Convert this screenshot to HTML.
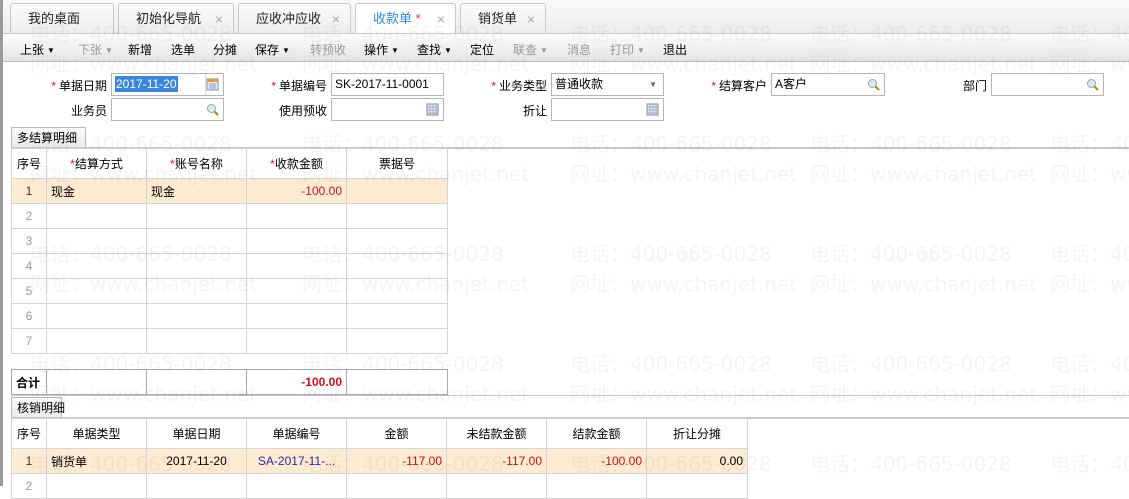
<!DOCTYPE html>
<html><head><meta charset="utf-8"><style>
*{box-sizing:border-box;margin:0;padding:0}
body{width:1129px;height:486px;overflow:hidden;background:#fff;position:relative;font:12px "Liberation Sans","Noto Sans CJK SC",sans-serif;color:#000}
.a{position:absolute}
.lbar{left:0;top:0;width:3px;height:486px;background:#9a9a9a}
.tabbar{left:3px;top:0;width:1126px;height:34px;background:linear-gradient(#fafafa,#ececec)}
.tab{position:absolute;top:3px;height:31px;border:1px solid #c9c9c9;border-bottom:none;border-radius:3px 3px 0 0;background:linear-gradient(#fbfbfb,#ededed);font-size:13px;line-height:30px;padding-left:17px;color:#222;white-space:nowrap}
.tab .x{position:absolute;right:10px;color:#aaa;font-size:14px}
.tab.on{background:#fff;color:#2f8ad8;height:32px}
.tool{left:3px;top:33px;width:1126px;height:29px;background:linear-gradient(#fdfdfd,#e4e4e4);border-top:1px solid #c8c8c8;border-bottom:1px solid #bdbdbd}
.ti{position:absolute;top:7px;font-size:12px}
.g{color:#999}
.tri{font-size:8px;vertical-align:1px;margin-left:3px}
.lab{position:absolute;text-align:right;width:100px;font-size:12px}
.lab i{color:#d2143a;font-style:normal;margin-right:3px}
.inp{position:absolute;height:23px;border:1px solid #b5b5b5;background:#fff;font-size:12px;line-height:21px;padding-left:3px}
.ic{position:absolute;right:4px;top:4px;width:13px;height:13px}
.stab{position:absolute;height:21px;border:1px solid #b8b8b8;border-bottom:none;background:linear-gradient(#fafafa,#ebebeb);font-size:12px;line-height:20px;padding:0 5px;white-space:nowrap}
.hl{position:absolute;height:2px;background:#c8c8c8;left:11px;right:0}
table{position:absolute;border-collapse:collapse;table-layout:fixed}
td{border:1px solid #d4d4d4;font-size:12px;height:25px;padding:0 4px;white-space:nowrap;overflow:hidden}
tr.h td{height:30px;text-align:center}
td.n{text-align:center;color:#999}
.r{color:#d0111d;text-align:right}
.hi td{background:#fdebd2}
.s{color:#d2143a}
.wm{position:absolute;font:20px "DejaVu Sans","Noto Sans CJK SC",sans-serif;color:rgba(0,0,0,0.045);white-space:nowrap;pointer-events:none}
</style></head><body>
<div class="a lbar"></div>
<div class="a tabbar"></div>
<div class="tab" style="left:10px;width:104px">我的桌面</div>
<div class="tab" style="left:118px;width:116px">初始化导航<span class="x">×</span></div>
<div class="tab" style="left:238px;width:113px">应收冲应收<span class="x">×</span></div>
<div class="tab on" style="left:355px;width:101px">收款单 <span style="color:#e33">*</span><span class="x">×</span></div>
<div class="tab" style="left:460px;width:86px">销货单<span class="x">×</span></div>
<div class="a tool">
<span class="ti" style="left:17px">上张<span class="tri">▼</span></span>
<span class="ti g" style="left:75px">下张<span class="tri">▼</span></span>
<span class="ti" style="left:125px">新增</span>
<span class="ti" style="left:168px">选单</span>
<span class="ti" style="left:210px">分摊</span>
<span class="ti" style="left:252px">保存<span class="tri">▼</span></span>
<span class="ti g" style="left:307px">转预收</span>
<span class="ti" style="left:361px">操作<span class="tri">▼</span></span>
<span class="ti" style="left:414px">查找<span class="tri">▼</span></span>
<span class="ti" style="left:467px">定位</span>
<span class="ti g" style="left:510px">联查<span class="tri">▼</span></span>
<span class="ti g" style="left:564px">消息</span>
<span class="ti g" style="left:607px">打印<span class="tri">▼</span></span>
<span class="ti" style="left:660px">退出</span>
</div>

<div class="lab" style="left:7px;top:77px"><i>*</i>单据日期</div>
<div class="inp" style="left:111px;top:73px;width:113px"><span style="background:#3a86d8;color:#fff;padding:1px 1px">2017-11-20</span><span style="position:absolute;left:93px;top:0;width:1px;height:21px;background:#ddd"></span><svg class="ic" viewBox="0 0 13 13"><rect x="1" y="1" width="11" height="11" fill="#e8eef8" stroke="#7c8ea8"/><rect x="1" y="1" width="11" height="3" fill="#e0a030"/><path d="M3 6h7M3 8h7M3 10h7" stroke="#8a9ab8"/></svg></div>
<div class="lab" style="left:227px;top:77px"><i>*</i>单据编号</div>
<div class="inp" style="left:331px;top:73px;width:113px">SK-2017-11-0001</div>
<div class="lab" style="left:447px;top:77px"><i>*</i>业务类型</div>
<div class="inp" style="left:551px;top:73px;width:113px">普通收款<span style="position:absolute;right:6px;top:0;font-size:8px;color:#666">▼</span></div>
<div class="lab" style="left:667px;top:77px"><i>*</i>结算客户</div>
<div class="inp" style="left:771px;top:73px;width:114px">A客户<svg class="ic" viewBox="0 0 13 13"><circle cx="5.5" cy="5.5" r="4" fill="#dfe8f4" stroke="#8aa"/><path d="M8.5 8.5l3.5 3.5" stroke="#b8860b" stroke-width="2"/></svg></div>
<div class="lab" style="left:887px;top:77px">部门</div>
<div class="inp" style="left:991px;top:73px;width:113px"><svg class="ic" viewBox="0 0 13 13"><circle cx="5.5" cy="5.5" r="4" fill="#dfe8f4" stroke="#8aa"/><path d="M8.5 8.5l3.5 3.5" stroke="#b8860b" stroke-width="2"/></svg></div>

<div class="lab" style="left:7px;top:102px">业务员</div>
<div class="inp" style="left:111px;top:98px;width:113px"><svg class="ic" viewBox="0 0 13 13"><circle cx="5.5" cy="5.5" r="4" fill="#dfe8f4" stroke="#8aa"/><path d="M8.5 8.5l3.5 3.5" stroke="#b8860b" stroke-width="2"/></svg></div>
<div class="lab" style="left:227px;top:102px">使用预收</div>
<div class="inp" style="left:331px;top:98px;width:113px"><svg class="ic" viewBox="0 0 13 13"><rect x="1" y="1" width="11" height="11" fill="#e8eef8" stroke="#7c8ea8"/><path d="M1 4h11M1 7h11M1 10h11M4 1v11M7 1v11M10 1v11" stroke="#8a9ab8" stroke-width=".7"/></svg></div>
<div class="lab" style="left:447px;top:102px">折让</div>
<div class="inp" style="left:551px;top:98px;width:113px"><svg class="ic" viewBox="0 0 13 13"><rect x="1" y="1" width="11" height="11" fill="#e8eef8" stroke="#7c8ea8"/><path d="M1 4h11M1 7h11M1 10h11M4 1v11M7 1v11M10 1v11" stroke="#8a9ab8" stroke-width=".7"/></svg></div>

<div class="stab" style="left:11px;top:127px;width:75px">多结算明细</div>
<div class="hl" style="top:147px"></div>
<table style="left:11px;top:148px;width:436px">
<colgroup><col style="width:35px"><col style="width:100px"><col style="width:100px"><col style="width:100px"><col style="width:101px"></colgroup>
<tr class="h"><td>序号</td><td><span class="s">*</span>结算方式</td><td><span class="s">*</span>账号名称</td><td><span class="s">*</span>收款金额</td><td>票据号</td></tr>
<tr class="hi"><td class="n" style="color:#333">1</td><td>现金</td><td>现金</td><td class="r">-100.00</td><td></td></tr>
<tr><td class="n">2</td><td></td><td></td><td></td><td></td></tr>
<tr><td class="n">3</td><td></td><td></td><td></td><td></td></tr>
<tr><td class="n">4</td><td></td><td></td><td></td><td></td></tr>
<tr><td class="n">5</td><td></td><td></td><td></td><td></td></tr>
<tr><td class="n">6</td><td></td><td></td><td></td><td></td></tr>
<tr><td class="n">7</td><td></td><td></td><td></td><td></td></tr>
</table>
<table style="left:11px;top:369px;width:436px">
<colgroup><col style="width:35px"><col style="width:100px"><col style="width:100px"><col style="width:100px"><col style="width:101px"></colgroup>
<tr><td style="border-color:#aaa;font-weight:bold;height:25px">合计</td><td style="border-color:#aaa"></td><td style="border-color:#aaa"></td><td class="r" style="border-color:#aaa;font-weight:bold">-100.00</td><td style="border-color:#aaa"></td></tr>
</table>
<div class="hl" style="top:395px;height:1px"></div>
<div class="stab" style="left:11px;top:397px;width:51px">核销明细</div>
<div class="hl" style="top:417px"></div>
<table style="left:11px;top:418px;width:736px">
<colgroup><col style="width:35px"><col style="width:100px"><col style="width:100px"><col style="width:100px"><col style="width:100px"><col style="width:100px"><col style="width:100px"><col style="width:101px"></colgroup>
<tr class="h"><td>序号</td><td>单据类型</td><td>单据日期</td><td>单据编号</td><td>金额</td><td>未结款金额</td><td>结款金额</td><td>折让分摊</td></tr>
<tr class="hi"><td class="n" style="color:#333">1</td><td>销货单</td><td style="text-align:center">2017-11-20</td><td style="color:#2a2aa8;text-align:center">SA-2017-11-...</td><td class="r">-117.00</td><td class="r">-117.00</td><td class="r">-100.00</td><td style="text-align:right">0.00</td></tr>
<tr><td class="n">2</td><td></td><td></td><td></td><td></td><td></td><td></td><td></td></tr>
</table>

<div class="wm" style="left:30px;top:18px">电话：400-665-0028</div><div class="wm" style="left:30px;top:48px">网址：www.chanjet.net</div>
<div class="wm" style="left:302px;top:18px">电话：400-665-0028</div><div class="wm" style="left:302px;top:48px">网址：www.chanjet.net</div>
<div class="wm" style="left:570px;top:18px">电话：400-665-0028</div><div class="wm" style="left:570px;top:48px">网址：www.chanjet.net</div>
<div class="wm" style="left:810px;top:18px">电话：400-665-0028</div><div class="wm" style="left:810px;top:48px">网址：www.chanjet.net</div>
<div class="wm" style="left:1050px;top:18px">电话：400-665-0028</div><div class="wm" style="left:1050px;top:48px">网址：www.chanjet.net</div>

<div class="wm" style="left:30px;top:128px">电话：400-665-0028</div><div class="wm" style="left:30px;top:158px">网址：www.chanjet.net</div>
<div class="wm" style="left:302px;top:128px">电话：400-665-0028</div><div class="wm" style="left:302px;top:158px">网址：www.chanjet.net</div>
<div class="wm" style="left:570px;top:128px">电话：400-665-0028</div><div class="wm" style="left:570px;top:158px">网址：www.chanjet.net</div>
<div class="wm" style="left:810px;top:128px">电话：400-665-0028</div><div class="wm" style="left:810px;top:158px">网址：www.chanjet.net</div>
<div class="wm" style="left:1050px;top:128px">电话：400-665-0028</div><div class="wm" style="left:1050px;top:158px">网址：www.chanjet.net</div>

<div class="wm" style="left:30px;top:238px">电话：400-665-0028</div><div class="wm" style="left:30px;top:268px">网址：www.chanjet.net</div>
<div class="wm" style="left:302px;top:238px">电话：400-665-0028</div><div class="wm" style="left:302px;top:268px">网址：www.chanjet.net</div>
<div class="wm" style="left:570px;top:238px">电话：400-665-0028</div><div class="wm" style="left:570px;top:268px">网址：www.chanjet.net</div>
<div class="wm" style="left:810px;top:238px">电话：400-665-0028</div><div class="wm" style="left:810px;top:268px">网址：www.chanjet.net</div>
<div class="wm" style="left:1050px;top:238px">电话：400-665-0028</div><div class="wm" style="left:1050px;top:268px">网址：www.chanjet.net</div>

<div class="wm" style="left:30px;top:348px">电话：400-665-0028</div><div class="wm" style="left:30px;top:378px">网址：www.chanjet.net</div>
<div class="wm" style="left:302px;top:348px">电话：400-665-0028</div><div class="wm" style="left:302px;top:378px">网址：www.chanjet.net</div>
<div class="wm" style="left:570px;top:348px">电话：400-665-0028</div><div class="wm" style="left:570px;top:378px">网址：www.chanjet.net</div>
<div class="wm" style="left:810px;top:348px">电话：400-665-0028</div><div class="wm" style="left:810px;top:378px">网址：www.chanjet.net</div>
<div class="wm" style="left:1050px;top:348px">电话：400-665-0028</div><div class="wm" style="left:1050px;top:378px">网址：www.chanjet.net</div>

<div class="wm" style="left:30px;top:448px">电话：400-665-0028</div>
<div class="wm" style="left:302px;top:448px">电话：400-665-0028</div>
<div class="wm" style="left:570px;top:448px">电话：400-665-0028</div>
<div class="wm" style="left:810px;top:448px">电话：400-665-0028</div>
<div class="wm" style="left:1050px;top:448px">电话：400-665-0028</div>
</body></html>
